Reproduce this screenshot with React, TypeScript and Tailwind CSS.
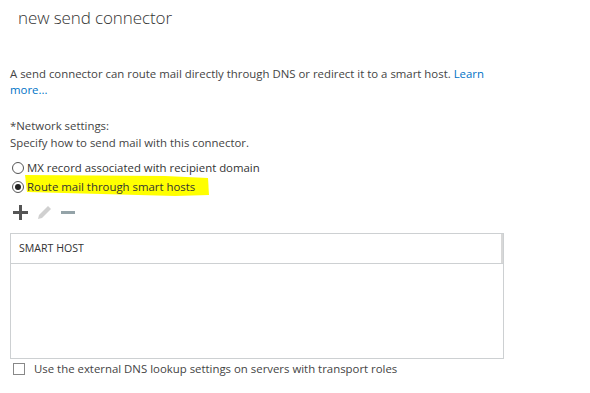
export default function App() {
  return (
    <div className="w-[590px] h-[393px] bg-white text-[#333] overflow-hidden" style={{ fontFamily: '"Open Sans", "Noto Sans", sans-serif' }}>
      {/* Title */}
      <div className="pl-[18px] pt-[4px] text-[17px] font-light text-[#333] leading-[28px] tracking-[-0.1px]">new send connector</div>

      <div className="pl-[10px] w-[504px]">
        {/* Description */}
        <p className="mt-[34px] text-[11.4px] leading-[16px] text-[#444]">
          A send connector can route mail directly through DNS or redirect it to a smart host.{' '}
          <a className="text-[#0072c6]">Learn</a>{' '}
          <a className="text-[#0072c6]">more...</a>
        </p>

        {/* Network settings */}
        <div className="mt-[20px] text-[11.4px] leading-[16px] text-[#444]">*Network settings:</div>
        <div className="text-[11.4px] leading-[17px] text-[#444]">Specify how to send mail with this connector.</div>

        <div className="mt-[7px] flex flex-col">
          <label className="flex items-center gap-[3px] h-[19px] text-[11.4px] text-[#333]">
            <span className="w-[12px] h-[12px] rounded-full border border-[#555] ml-[2px]" />
            MX record associated with recipient domain
          </label>
          <label className="flex items-center gap-[3px] h-[19px] text-[11.4px] text-[#333]">
            <span className="w-[12px] h-[12px] rounded-full border border-[#555] ml-[2px] flex items-center justify-center">
              <span className="w-[6px] h-[6px] rounded-full bg-[#222]" />
            </span>
            <span className="relative">
              <svg className="absolute -left-[2px] -top-[4px]" width="185" height="24" viewBox="0 0 185 24">
                <polygon points="0,1 140,2 183,4 184,21 150,22 2,18" fill="#ffff00" />
              </svg>
              <span className="relative">Route mail through smart hosts</span>
            </span>
          </label>
        </div>

        {/* Toolbar */}
        <div className="mt-[7px] flex items-center gap-[9px] h-[18px] pl-[3px]">
          <svg width="15" height="15" viewBox="0 0 15 15">
            <rect x="6" y="0" width="3" height="15" fill="#555" />
            <rect x="0" y="6" width="15" height="3" fill="#555" />
          </svg>
          <svg width="15" height="15" viewBox="0 0 15 15">
            <path d="M11 1 L14 4 L5 13 L1 14 L2 10 Z" fill="#d0d0d0" />
          </svg>
          <svg width="14" height="15" viewBox="0 0 14 15">
            <rect x="0" y="6" width="14" height="3" fill="#94a3a8" />
          </svg>
        </div>

        {/* Table */}
        <div className="mt-[12px] w-[494px] border border-[#cdd0d2]">
          <div className="flex h-[30px] border-b border-[#cdd0d2]">
            <div className="flex-1 flex items-center pl-[8px] text-[10.6px] text-[#333]">SMART HOST</div>
            <div className="w-[2px] bg-[#d8d8d8]" />
          </div>
          <div className="h-[94px]" />
        </div>

        {/* Checkbox */}
        <label className="mt-[2px] flex items-center gap-[9px] h-[16px] text-[11.4px] text-[#444]">
          <span className="w-[12px] h-[12px] border border-[#888] ml-[3px]" />
          Use the external DNS lookup settings on servers with transport roles
        </label>
      </div>
    </div>
  );
}
